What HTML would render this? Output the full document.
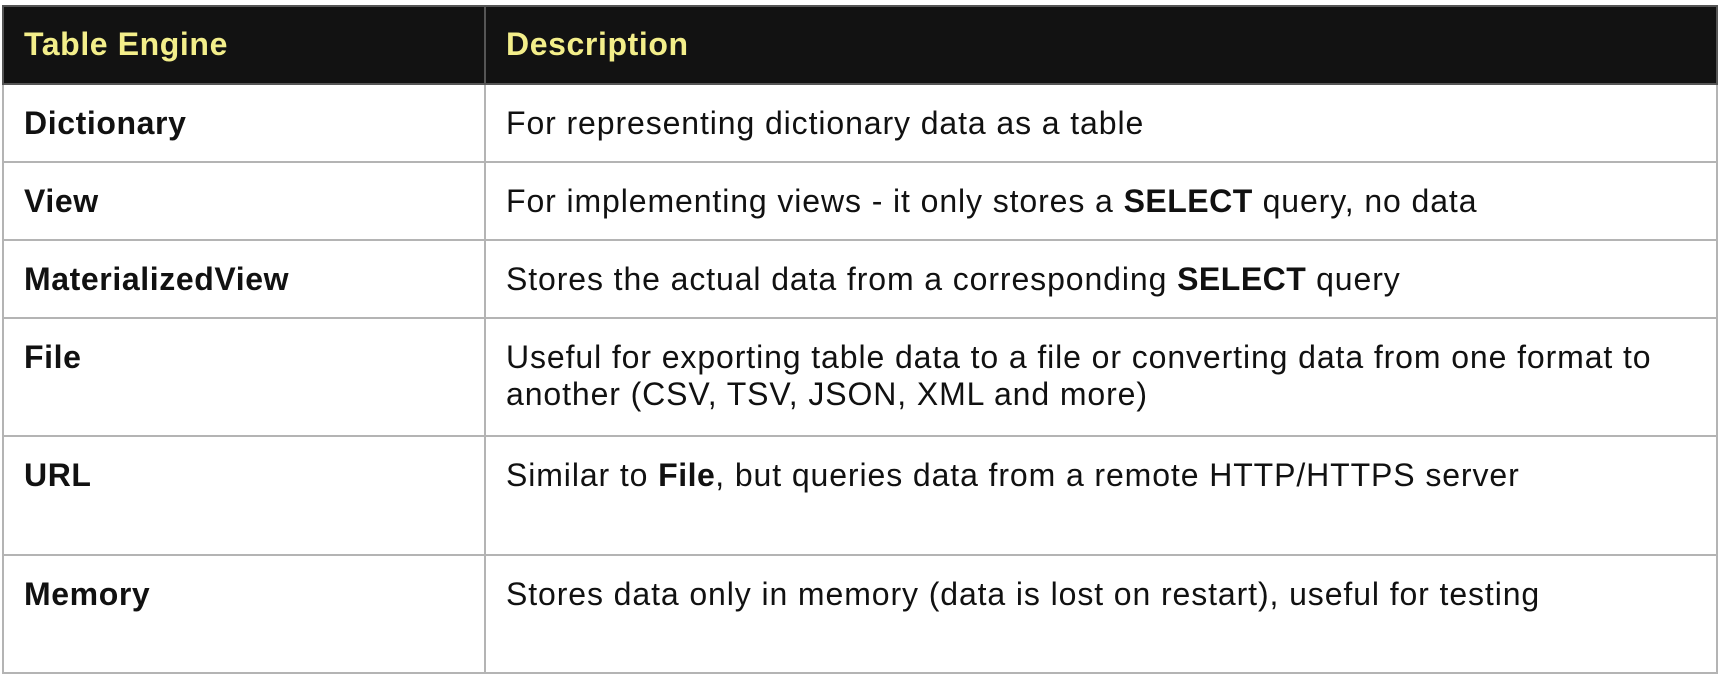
<!DOCTYPE html>
<html><head><style>
html,body{margin:0;padding:0;background:#fff;width:1720px;height:674px;overflow:hidden}
.t{position:absolute;left:2px;top:5px;width:1716px;border-collapse:collapse;font-family:"Liberation Sans",Arial,sans-serif;font-size:32px;letter-spacing:0.9px;color:#111}
td,th{border:2px solid #b4b4b4;vertical-align:top;text-align:left;padding:20px 18px 0 20px;line-height:37px;box-sizing:border-box}
th{background:#121212;color:#f3ee8a;font-weight:bold;padding-top:19px;border-color:#555;letter-spacing:0.6px}
td:first-child,th:first-child{width:482px}
td:first-child{font-weight:bold;letter-spacing:0.6px}
b{letter-spacing:0.5px}
</style></head><body>
<table class="t">
<tr style="height:78px"><th>Table Engine</th><th>Description</th></tr>
<tr style="height:78px"><td>Dictionary</td><td>For representing dictionary data as a table</td></tr>
<tr style="height:78px"><td>View</td><td>For implementing views - it only stores a <b>SELECT</b> query, no data</td></tr>
<tr style="height:78px"><td>MaterializedView</td><td>Stores the actual data from a corresponding <b>SELECT</b> query</td></tr>
<tr style="height:118px"><td>File</td><td>Useful for exporting table data to a file or converting data from one format to another (CSV, TSV, JSON, XML and more)</td></tr>
<tr style="height:119px"><td>URL</td><td>Similar to <b>File</b>, but queries data from a remote HTTP/HTTPS server</td></tr>
<tr style="height:118px"><td>Memory</td><td>Stores data only in memory (data is lost on restart), useful for testing</td></tr>
</table>
</body></html>
